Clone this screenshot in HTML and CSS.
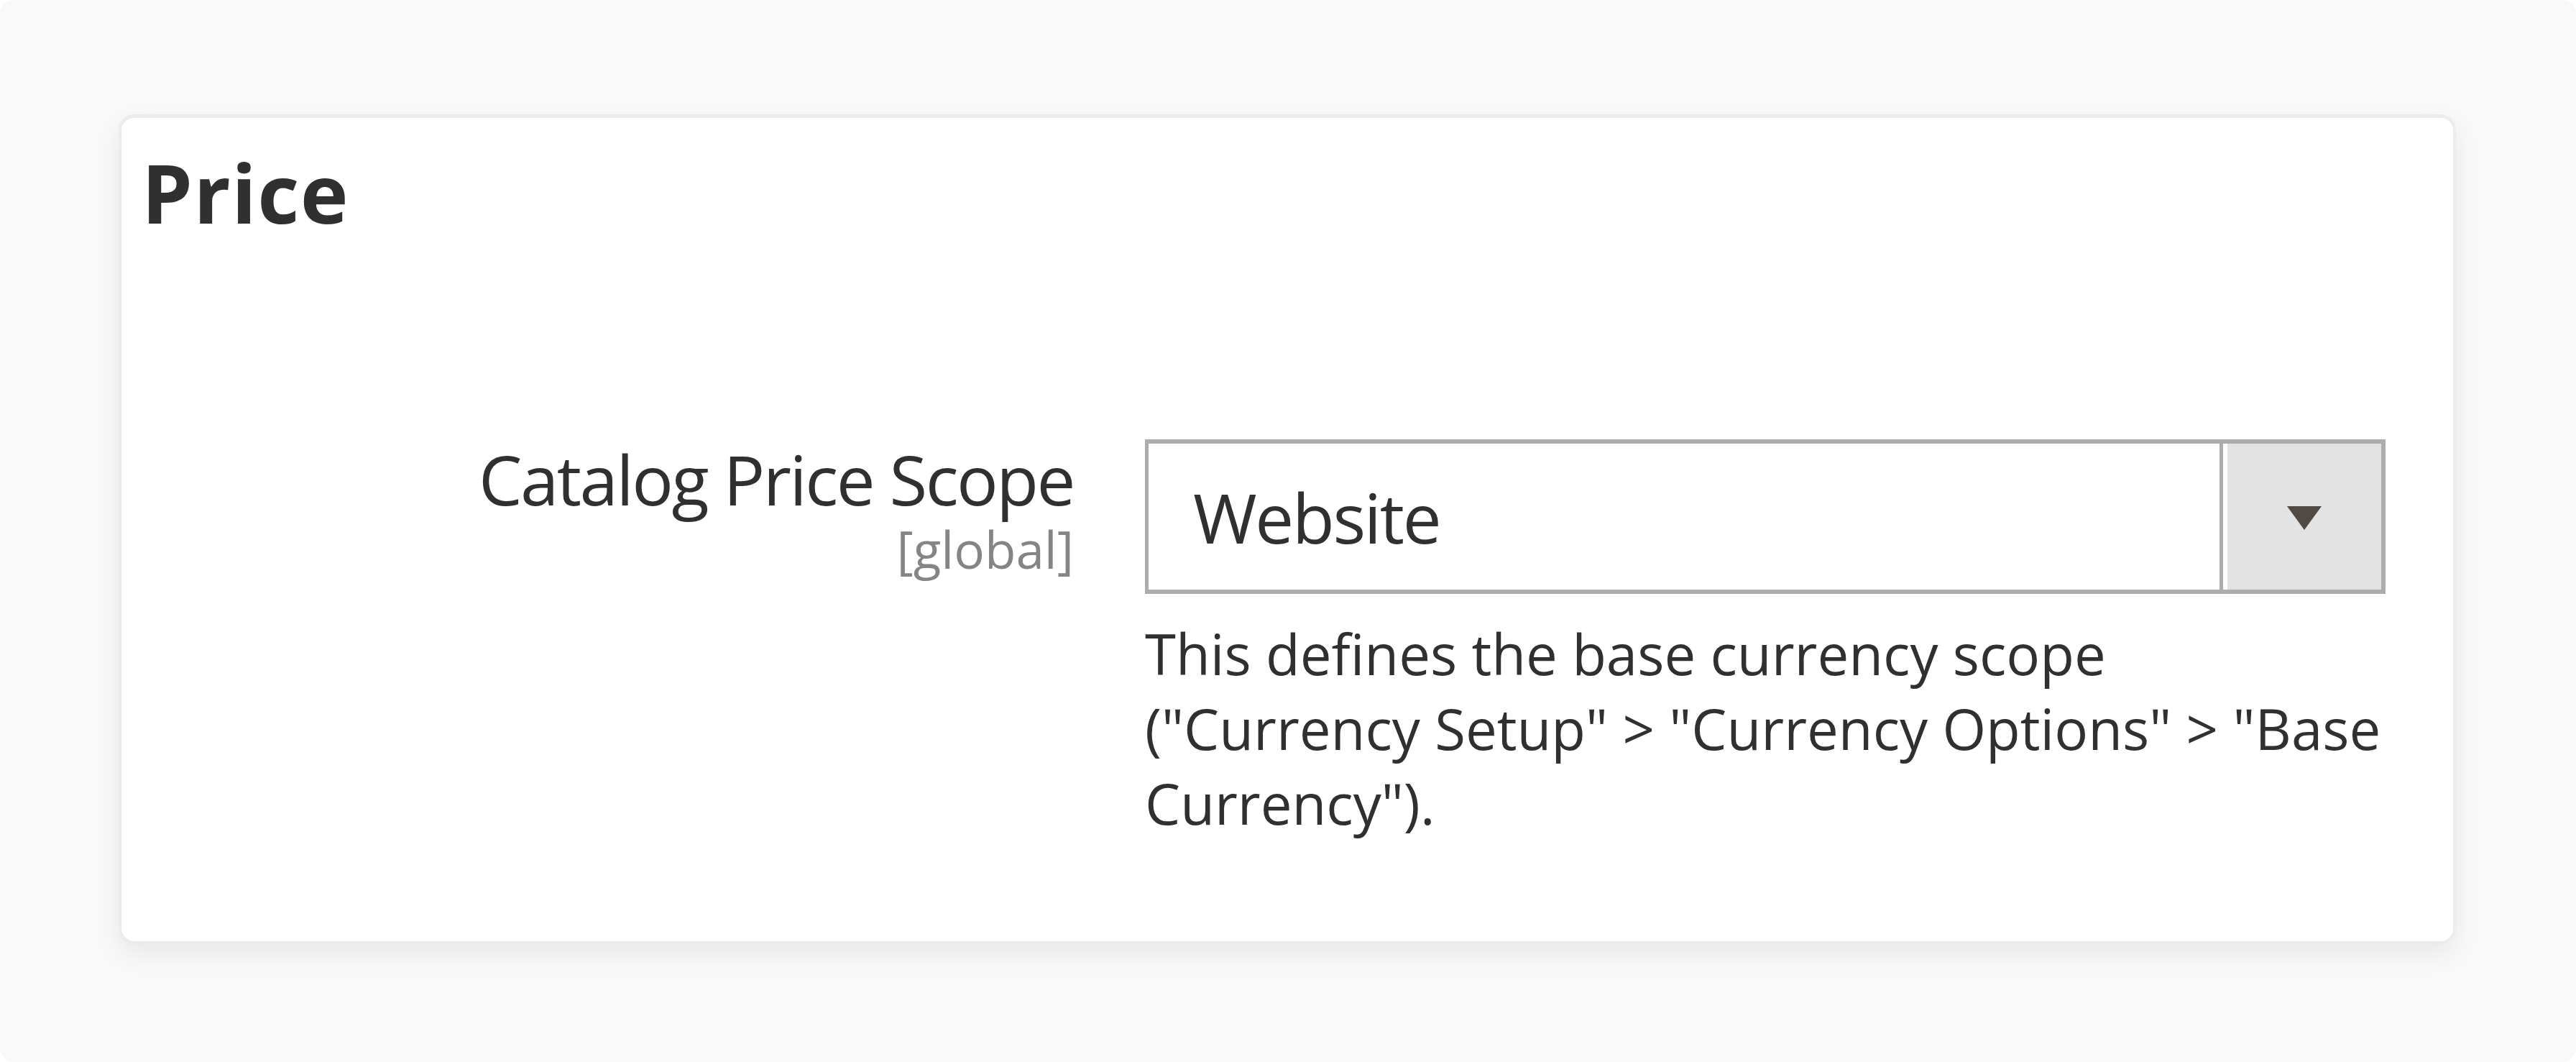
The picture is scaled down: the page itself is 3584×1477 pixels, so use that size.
FILE: index.html
```html
<!DOCTYPE html>
<html lang="en">
<head>
<meta charset="utf-8">
<title>Price</title>
<link rel="stylesheet" href="styles.css">
</head>
<body>
<div class="frame">
  <section class="card">
    <h2 class="card-title">Price</h2>
    <div class="field">
      <div class="field-label">
        <span class="label-text">Catalog Price Scope</span>
        <span class="label-scope">[global]</span>
      </div>
      <div class="field-control">
        <div class="select">
          <div class="select-value">Website</div>
          <div class="select-divider"></div>
          <div class="select-btn">
            <svg class="select-arrow" width="48" height="33" viewBox="0 0 48 33"><polygon points="0,0 48,0 24,33" fill="#514943"/></svg>
          </div>
        </div>
        <p class="field-note">This defines the base currency scope ("Currency Setup" &gt; "Currency Options" &gt; "Base Currency").</p>
      </div>
    </div>
  </section>
</div>
</body>
</html>
```

FILE: styles.css
```css
html, body {
  margin: 0;
  padding: 0;
  background: #ffffff;
}

body {
  font-family: "Open Sans", "Noto Sans", sans-serif;
  color: #303030;
}

.frame {
  box-sizing: border-box;
  width: 3584px;
  height: 1477px;
  background: #f9f9f9;
  border-radius: 20px;
  padding: 159px 0 0 165px;
}

.card {
  box-sizing: border-box;
  width: 3252px;
  height: 1154px;
  background: #ffffff;
  border: 4px solid #ececec;
  border-top-width: 5px;
  border-radius: 22px;
  box-shadow: 0 14px 34px rgba(0, 0, 0, 0.07);
}

.card-title {
  margin: 47px 0 0 28px;
  font-size: 113px;
  line-height: 1;
  font-weight: 700;
  letter-spacing: 1.5px;
  color: #303030;
}

.field {
  display: grid;
  grid-template-columns: 1325px 1726px;
  column-gap: 99px;
  margin-top: 287px;
}

.field-label {
  display: flex;
  flex-direction: column;
  align-items: flex-end;
  text-align: right;
  padding-top: 2px;
}

.label-text {
  font-size: 96px;
  line-height: 1.1;
  letter-spacing: -2.5px;
  color: #303030;
}

.label-scope {
  margin-top: 6px;
  font-size: 71px;
  line-height: 1.1;
  color: #858585;
}

.select {
  box-sizing: border-box;
  display: flex;
  height: 215px;
  border: 6px solid #adadad;
  border-left-width: 5px;
  background: #ffffff;
}

.select-value {
  flex: 1;
  display: flex;
  align-items: center;
  padding-left: 62px;
  font-size: 96px;
  line-height: 1;
  letter-spacing: -2.3px;
  color: #303030;
}

.select-divider {
  width: 5px;
  background: #adadad;
}

.select-btn {
  width: 214px;
  margin-left: 6px;
  background: #e3e3e3;
  display: flex;
  align-items: center;
  justify-content: center;
}

.select-arrow {
  display: block;
  margin-top: 3px;
}

.field-note {
  margin: 31px 0 0 0;
  font-size: 78px;
  line-height: 104px;
  color: #303030;
}
```
